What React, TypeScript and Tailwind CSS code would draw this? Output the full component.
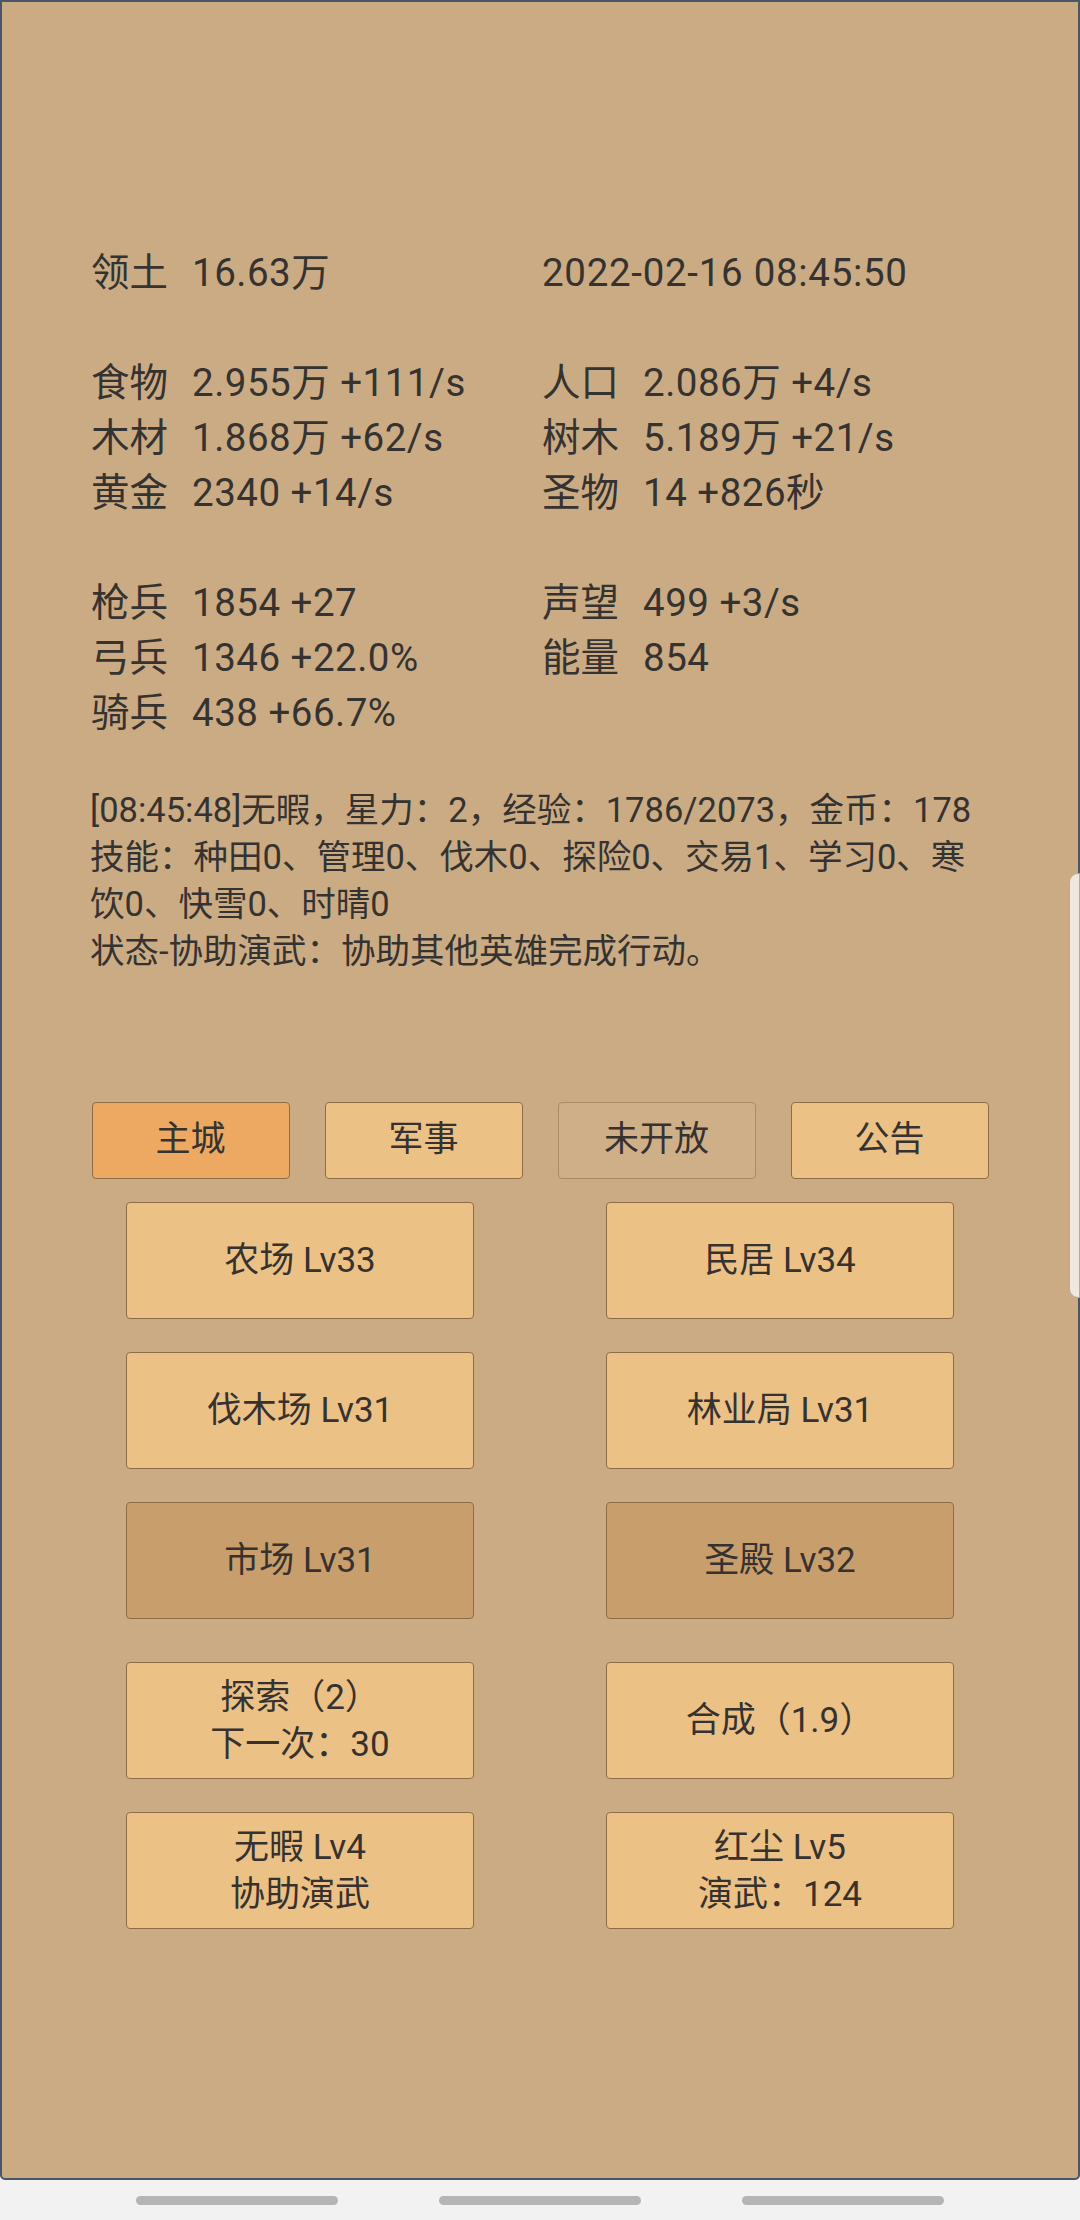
import React from 'react';

type Stat = { label: string; value: string };

const FONT = { fontFamily: 'Roboto, "Noto Sans CJK SC", sans-serif' };

function StatCell({ stat }: { stat?: Stat }): JSX.Element {
  if (!stat) return <div />;
  return (
    <div className="flex whitespace-nowrap">
      <span className="w-[101px] shrink-0">{stat.label}</span>
      <span className="tracking-[0.5px]">{stat.value}</span>
    </div>
  );
}

function StatRow({ left, right }: { left?: Stat; right?: Stat }): JSX.Element {
  return (
    <div className="grid grid-cols-[451px_1fr] h-[55px] leading-[55px]">
      <StatCell stat={left} />
      <StatCell stat={right} />
    </div>
  );
}

function Spacer(): JSX.Element {
  return <div className="h-[55px]" />;
}

type BtnProps = { lines: string[]; dim?: boolean };

function BuildingButton({ lines, dim }: BtnProps): JSX.Element {
  return (
    <button
      className={`h-[117px] w-[348px] rounded-[4px] border border-[#8d6c47] flex flex-col items-center justify-center text-[35px] leading-[47px] text-[#363230] ${
        dim ? 'bg-[#c99e6d]' : 'bg-[#ebc186]'
      }`}
    >
      {lines.map((l) => (
        <span key={l} className="whitespace-nowrap">
          {l}
        </span>
      ))}
    </button>
  );
}

const tabs = [
  { name: '主城', cls: 'bg-[#eda962] border-[#8d6c47]' },
  { name: '军事', cls: 'bg-[#ebc186] border-[#8d6c47]' },
  { name: '未开放', cls: 'bg-[#cfaf88] border-[#a88b69]' },
  { name: '公告', cls: 'bg-[#ebc186] border-[#8d6c47]' },
];

export default function App(): JSX.Element {
  return (
    <div className="w-[1080px] h-[2220px] flex flex-col bg-[#f2f2f2]" style={FONT}>
      <div className="relative h-[2180px] shrink-0 border-2 border-[#4a5568] rounded-b-[5px] bg-[#cbab83] text-[#353331]">
        {/* stats */}
        <div className="pt-[243px] pl-[89px] text-[38.5px]">
          <div className="grid grid-cols-[451px_1fr] h-[55px] leading-[55px]">
            <StatCell stat={{ label: '领土', value: '16.63万' }} />
            <div className="whitespace-nowrap tracking-[0.7px]">2022-02-16 08:45:50</div>
          </div>
          <Spacer />
          <StatRow left={{ label: '食物', value: '2.955万 +111/s' }} right={{ label: '人口', value: '2.086万 +4/s' }} />
          <StatRow left={{ label: '木材', value: '1.868万 +62/s' }} right={{ label: '树木', value: '5.189万 +21/s' }} />
          <StatRow left={{ label: '黄金', value: '2340 +14/s' }} right={{ label: '圣物', value: '14 +826秒' }} />
          <Spacer />
          <StatRow left={{ label: '枪兵', value: '1854 +27' }} right={{ label: '声望', value: '499 +3/s' }} />
          <StatRow left={{ label: '弓兵', value: '1346 +22.0%' }} right={{ label: '能量', value: '854' }} />
          <StatRow left={{ label: '骑兵', value: '438 +66.7%' }} />
        </div>

        {/* log */}
        <div className="mt-[47px] pl-[88px] text-[34.5px] leading-[47px]">
          <div className="whitespace-nowrap">[08:45:48]无暇，星力：2，经验：1786/2073，金币：178</div>
          <div className="whitespace-nowrap">技能：种田0、管理0、伐木0、探险0、交易1、学习0、寒</div>
          <div className="whitespace-nowrap">饮0、快雪0、时晴0</div>
          <div className="whitespace-nowrap">状态-协助演武：协助其他英雄完成行动。</div>
        </div>

        {/* tabs */}
        <div className="mt-[127px] flex justify-center gap-[35px]">
          {tabs.map((t) => (
            <button
              key={t.name}
              className={`h-[77px] w-[198px] rounded-[4px] border text-[35px] text-[#363230] ${t.cls}`}
            >
              {t.name}
            </button>
          ))}
        </div>

        {/* buildings */}
        <div className="mt-[23px] grid grid-cols-[348px_348px] justify-center gap-x-[132px] gap-y-[33px]">
          <BuildingButton lines={['农场 Lv33']} />
          <BuildingButton lines={['民居 Lv34']} />
          <BuildingButton lines={['伐木场 Lv31']} />
          <BuildingButton lines={['林业局 Lv31']} />
          <BuildingButton lines={['市场 Lv31']} dim />
          <BuildingButton lines={['圣殿 Lv32']} dim />
        </div>
        <div className="mt-[43px] grid grid-cols-[348px_348px] justify-center gap-x-[132px] gap-y-[33px]">
          <BuildingButton lines={['探索（2）', '下一次：30']} />
          <BuildingButton lines={['合成（1.9）']} />
          <BuildingButton lines={['无暇 Lv4', '协助演武']} />
          <BuildingButton lines={['红尘 Lv5', '演武：124']} />
        </div>

        {/* side handle */}
        <div className="absolute right-[-2px] top-[871px] h-[425px] w-[11px] rounded-l-[9px] border border-[#b3aba2] bg-[#f0e8de]" />
      </div>

      {/* nav bar */}
      <div className="flex-1 flex items-center justify-center gap-[101px]">
        <div className="h-[9px] w-[202px] rounded-full bg-[#b5b5b5]" />
        <div className="h-[9px] w-[202px] rounded-full bg-[#b5b5b5]" />
        <div className="h-[9px] w-[202px] rounded-full bg-[#b5b5b5]" />
      </div>
    </div>
  );
}
